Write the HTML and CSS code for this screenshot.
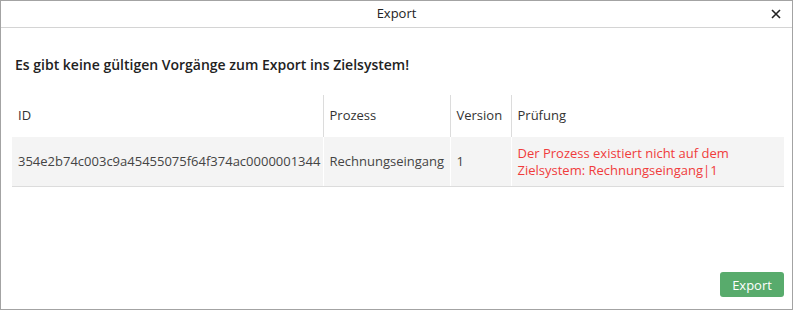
FILE: index.html
```html
<!DOCTYPE html>
<html lang="de">
    <head>
        <meta charset="UTF-8" />
        <title>Export</title>
        <link rel="stylesheet" href="styles.css">
    </head>
    <body>
        <div class="dialog">
            <div class="dialog-header">
                <span class="dialog-title">Export</span>
                <button class="close-button" aria-label="Schließen">
                    <svg width="10" height="10" viewBox="0 0 10 10">
                        <path d="M1 1 L9 9 M9 1 L1 9" stroke="#222" stroke-width="1.6" fill="none" />
                    </svg>
                </button>
            </div>
            <div class="dialog-body">
                <p class="message">Es gibt keine gültigen Vorgänge zum Export ins Zielsystem!</p>
                <table class="result-table">
                    <thead>
                        <tr>
                            <th class="col-id">ID</th>
                            <th class="col-process">Prozess</th>
                            <th class="col-version">Version</th>
                            <th class="col-check">Prüfung</th>
                        </tr>
                    </thead>
                    <tbody>
                        <tr>
                            <td>354e2b74c003c9a45455075f64f374ac0000001344</td>
                            <td>Rechnungseingang</td>
                            <td>1</td>
                            <td class="error">Der Prozess existiert nicht auf dem<br>Zielsystem: Rechnungseingang|1</td>
                        </tr>
                    </tbody>
                </table>
            </div>
            <div class="dialog-footer">
                <button class="export-button">Export</button>
            </div>
        </div>
    </body>
</html>
```

FILE: styles.css
```css
body {
    margin: 0;
    font-family: "Open Sans", "Liberation Sans", sans-serif;
    font-size: 13px;
    color: #333;
    background-color: #fff;
}

.dialog {
    box-sizing: border-box;
    width: 793px;
    height: 310px;
    border: 1px solid #a3a3a3;
    display: flex;
    flex-direction: column;
    background-color: #fff;
}

.dialog-header {
    position: relative;
    box-sizing: border-box;
    height: 27px;
    padding-bottom: 2px;
    border-bottom: 1px solid #d4d4d4;
    display: flex;
    justify-content: center;
    align-items: center;
}

.dialog-title {
    color: #222;
}

.close-button {
    position: absolute;
    right: 10px;
    top: 7px;
    width: 12px;
    height: 12px;
    padding: 0;
    border: none;
    background: none;
    display: flex;
    align-items: center;
    justify-content: center;
}

.dialog-body {
    padding: 0 8px 0 11px;
}

.message {
    margin: 27px 0 0 3px;
    font-size: 14px;
    font-weight: 600;
    color: #222;
    line-height: 20px;
}

.result-table {
    margin-top: 20px;
    width: 772px;
    border-collapse: collapse;
    table-layout: fixed;
}

.result-table th {
    box-sizing: border-box;
    height: 42px;
    padding: 0 6px 2px;
    text-align: left;
    font-weight: normal;
    color: #333;
    border-left: 1px solid #dcdcdc;
}

.result-table th:first-child {
    border-left: none;
}

.col-id {
    width: 311px;
}

.col-process {
    width: 127px;
}

.col-version {
    width: 61px;
}

.result-table td {
    height: 49px;
    padding: 0 6px;
    background-color: #f4f4f4;
    border-left: 1px solid #fff;
    border-bottom: 1px solid #dcdcdc;
    line-height: 17px;
    color: #444;
    white-space: nowrap;
}

.result-table td:first-child {
    border-left: none;
}

.result-table td.error {
    color: #f03c3c;
}

.dialog-footer {
    margin-top: auto;
    display: flex;
    justify-content: flex-end;
    padding: 0 8px 12px 0;
}

.export-button {
    width: 64px;
    height: 25px;
    border: none;
    border-radius: 3px;
    background-color: #58ab6c;
    color: #fff;
    font-family: inherit;
    font-size: 13px;
    padding: 0;
}
```
